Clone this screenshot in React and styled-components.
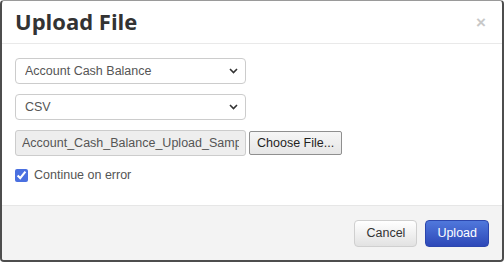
import styled, { createGlobalStyle } from "styled-components";

const GlobalStyle = createGlobalStyle`
    html, body {
        margin: 0;
        padding: 0;
        background: #ffffff;
    }
    * {
        box-sizing: border-box;
    }
`

const Modal = styled.div`
    width: 504px;
    height: 262px;
    display: flex;
    flex-direction: column;
    background: #ffffff;
    border: 2px solid #4d4d4d;
    border-top: 1px solid #9a9a9a;
    border-radius: 4px;
    overflow: hidden;
    font-family: "Liberation Sans", Arial, sans-serif;
`
const Header = styled.div`
    height: 43px;
    padding: 0 13px 0 13px;
    display: flex;
    justify-content: space-between;
    align-items: center;
    border-bottom: 1px solid #e9e9e9;
`
const Title = styled.h1`
    margin: 0 0 2px 0;
    font-family: "Open Sans", Lato, sans-serif;
    font-size: 22px;
    font-weight: 700;
    color: #333333;
`
const Close = styled.span`
    font-size: 17px;
    font-weight: 700;
    color: #c8c8c8;
    margin-right: 3px;
    line-height: 1;
`
const Body = styled.div`
    flex: 1;
    padding: 14px 13px 0 13px;
    display: flex;
    flex-direction: column;
    gap: 10px;
`
const SelectWrap = styled.div`
    position: relative;
    width: 231px;
`
const Select = styled.select`
    appearance: none;
    width: 100%;
    height: 26px;
    padding: 0 24px 0 9px;
    border: 1px solid #cccccc;
    border-radius: 4px;
    background: #ffffff;
    color: #555555;
    font-family: "Liberation Sans", Arial, sans-serif;
    font-size: 12.5px;
    outline: none;
`
const Chevron = styled.svg`
    position: absolute;
    right: 8px;
    top: 10px;
    pointer-events: none;
`
const FileRow = styled.div`
    display: flex;
    align-items: center;
    gap: 3px;
`
const FileName = styled.input`
    width: 231px;
    height: 26px;
    padding: 0 6px;
    border: 1px solid #cccccc;
    border-radius: 3px;
    background: #eeeeee;
    color: #555555;
    font-family: "Liberation Sans", Arial, sans-serif;
    font-size: 12.5px;
    outline: none;
`
const ChooseButton = styled.button`
    height: 24px;
    padding: 0 7px;
    border: 1px solid #8f8f8f;
    border-radius: 2px;
    background: linear-gradient(#f6f6f6, #e6e6e6);
    color: #1f1f1f;
    font-family: "Liberation Sans", Arial, sans-serif;
    font-size: 12.5px;
`
const CheckRow = styled.label`
    display: flex;
    align-items: center;
    gap: 6px;
    margin-top: 2px;
    color: #555555;
    font-size: 12.5px;
`
const Check = styled.input`
    margin: 0;
    width: 13px;
    height: 13px;
    accent-color: #4a70e0;
`
const Footer = styled.div`
    height: 55px;
    padding: 0 13px;
    display: flex;
    justify-content: flex-end;
    align-items: center;
    gap: 8px;
    background: #f3f3f3;
    border-top: 1px solid #e6e6e6;
`
const Button = styled.button`
    height: 27px;
    padding: 0 ${props => props.$pad}px;
    border-radius: 4px;
    font-family: "Liberation Sans", Arial, sans-serif;
    font-size: 12.5px;
    border: 1px solid ${props => props.$primary ? '#2c46ad' : '#cfcfcf'};
    color: ${props => props.$primary ? '#ffffff' : '#333333'};
    background: ${props => props.$primary
        ? 'linear-gradient(#5078dc, #2d48b8)'
        : 'linear-gradient(#ffffff, #e2e2e2)'};
`

const ChevronIcon = () => (
    <Chevron width="9" height="6" viewBox="0 0 9 6">
        <path d="M1 1 L4.5 4.5 L8 1" fill="none" stroke="#333" strokeWidth="1.6" />
    </Chevron>
)

const App = () => {
    return (
        <>
            <GlobalStyle />
            <Modal>
                <Header>
                    <Title>Upload File</Title>
                    <Close>×</Close>
                </Header>
                <Body>
                    <SelectWrap>
                        <Select defaultValue="acb">
                            <option value="acb">Account Cash Balance</option>
                        </Select>
                        <ChevronIcon />
                    </SelectWrap>
                    <SelectWrap>
                        <Select defaultValue="csv">
                            <option value="csv">CSV</option>
                        </Select>
                        <ChevronIcon />
                    </SelectWrap>
                    <FileRow>
                        <FileName readOnly value="Account_Cash_Balance_Upload_Sample.csv" />
                        <ChooseButton>Choose File...</ChooseButton>
                    </FileRow>
                    <CheckRow>
                        <Check type="checkbox" defaultChecked />
                        Continue on error
                    </CheckRow>
                </Body>
                <Footer>
                    <Button $pad={11}>Cancel</Button>
                    <Button $primary $pad={11}>Upload</Button>
                </Footer>
            </Modal>
        </>
    )
}

export default App
